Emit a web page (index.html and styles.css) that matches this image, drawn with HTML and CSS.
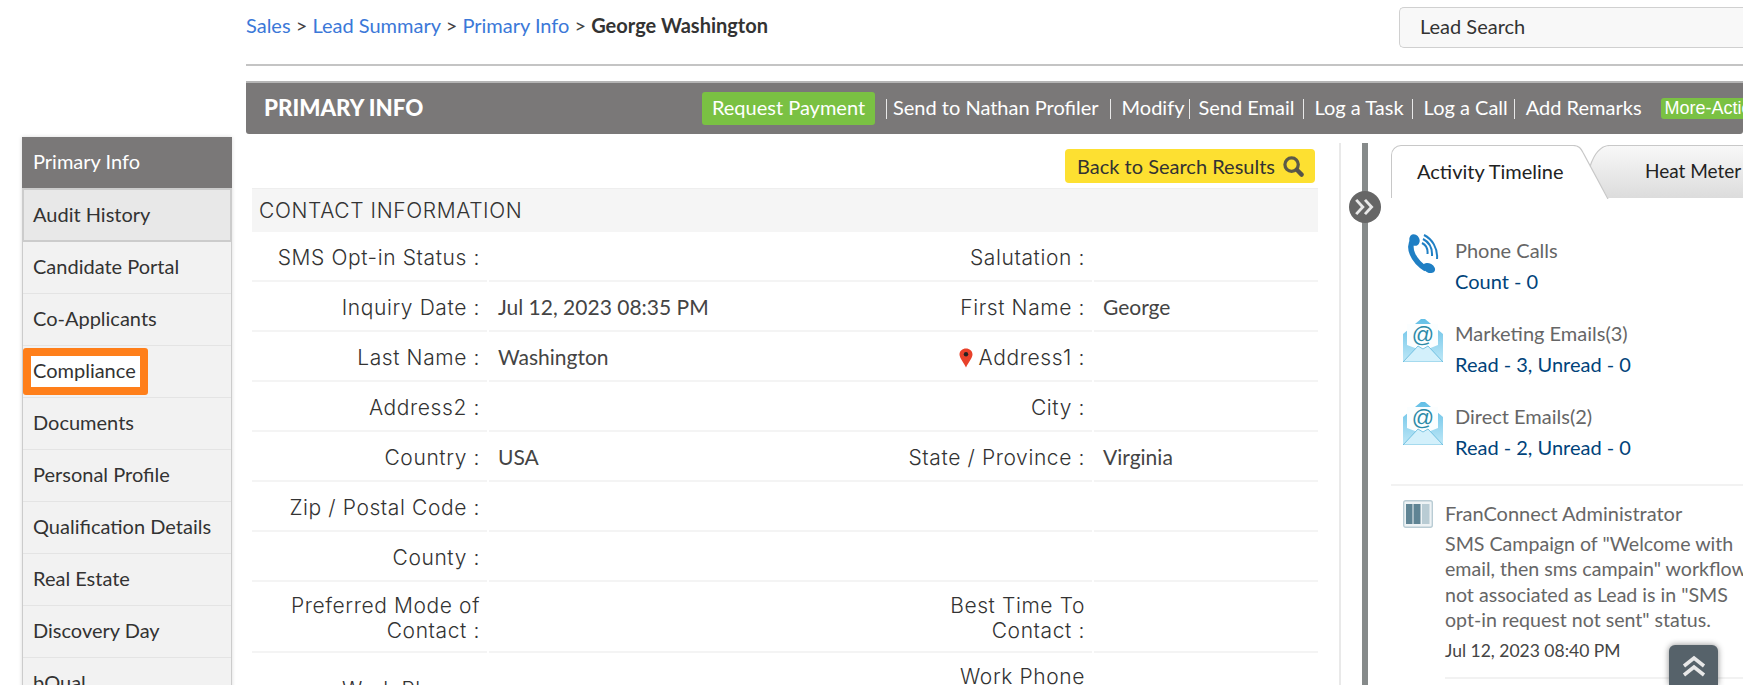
FILE: index.html
```html
<!DOCTYPE html>
<html lang="en">
<head>
    <meta charset="UTF-8">
    <title>Primary Info</title>
    <link rel="stylesheet" href="styles.css">
</head>
<body>

<div class="page">
    <!-- Left side menu -->
    <div class="side-menu">
        <div class="side-item side-active">Primary Info</div>
        <div class="side-item side-hover">Audit History</div>
        <div class="side-item">Candidate Portal</div>
        <div class="side-item">Co-Applicants</div>
        <div class="side-item"><span class="callout"></span><span class="callout-text">Compliance</span></div>
        <div class="side-item">Documents</div>
        <div class="side-item">Personal Profile</div>
        <div class="side-item">Qualification Details</div>
        <div class="side-item">Real Estate</div>
        <div class="side-item">Discovery Day</div>
        <div class="side-item">bQual</div>
    </div>

    <div class="main">
        <!-- Breadcrumb and search -->
        <div class="top-row">
            <div class="breadcrumb">
                <a href="#">Sales</a> &gt; <a href="#">Lead Summary</a> &gt; <a href="#">Primary Info</a> &gt; <b>George Washington</b>
            </div>
            <div class="search-box">Lead Search</div>
        </div>

        <!-- Header bar -->
        <div class="title-bar">
            <div class="title">PRIMARY INFO</div>
            <div class="actions">
                <a href="#" class="btn-green">Request Payment</a>
                <a href="#" class="action action-first">Send to Nathan Profiler</a>
                <a href="#" class="action action-modify">Modify</a>
                <a href="#" class="action action-mail">Send Email</a>
                <a href="#" class="action">Log a Task</a>
                <a href="#" class="action action-call">Log a Call</a>
                <a href="#" class="action action-last">Add Remarks</a>
                <a href="#" class="btn-more">More-Actions</a>
            </div>
        </div>

        <div class="content">
            <!-- Contact information -->
            <div class="left-panel">
                <div class="back-row">
                    <a href="#" class="btn-back">Back to Search Results
                        <svg class="search-icon" viewBox="0 0 22 22" width="21" height="21">
                            <circle cx="9" cy="9" r="7" fill="#fde031" stroke="#5c5a48" stroke-width="3.400"/>
                            <path d="M14.500 14.500l5 5" stroke="#55534a" stroke-width="4.500" stroke-linecap="round"/>
                        </svg>
                    </a>
                </div>
                <div class="section-head">CONTACT INFORMATION</div>
                <div class="info-grid">
                    <div class="label">SMS Opt-in Status :</div><div class="value"></div>
                    <div class="label">Salutation :</div><div class="value"></div>

                    <div class="label">Inquiry Date :</div><div class="value">Jul 12, 2023 08:35 PM</div>
                    <div class="label">First Name :</div><div class="value">George</div>

                    <div class="label">Last Name :</div><div class="value">Washington</div>
                    <div class="label">
                        <svg class="pin" viewBox="0 0 14 20" width="14" height="20">
                            <path d="M7 0.500c3.600 0 6.500 2.500 6.500 6 0 3.600-4 7.500-6.500 13C4.500 14 .5 10.100 .5 6.500 .5 3 3.400 .5 7 .5z" fill="#e8412a"/>
                            <circle cx="7" cy="6.300" r="2.200" fill="#222"/>
                        </svg>Address1 :
                    </div><div class="value"></div>

                    <div class="label">Address2 :</div><div class="value"></div>
                    <div class="label">City :</div><div class="value"></div>

                    <div class="label">Country :</div><div class="value">USA</div>
                    <div class="label">State / Province :</div><div class="value">Virginia</div>

                    <div class="label">Zip / Postal Code :</div><div class="value"></div>
                    <div class="label"></div><div class="value"></div>

                    <div class="label">County :</div><div class="value"></div>
                    <div class="label"></div><div class="value"></div>

                    <div class="label">Preferred Mode of Contact :</div><div class="value"></div>
                    <div class="label">Best Time To Contact :</div><div class="value"></div>

                    <div class="label">Work Phone :</div><div class="value"></div>
                    <div class="label">Work Phone Extension :</div><div class="value"></div>
                </div>
            </div>

            <div class="panel-divider"></div>

            <!-- Timeline rail -->
            <div class="rail">
                <div class="rail-toggle">
                    <svg viewBox="0 0 20 16" width="22" height="18">
                        <path d="M2 1.500L8 8l-6 6.500M10 1.500L16 8l-6 6.500" fill="none" stroke="#e9e9e9" stroke-width="2.600"/>
                    </svg>
                </div>
            </div>

            <!-- Activity panel -->
            <div class="right-panel">
                <div class="tabs">
                    <div class="tab tab-on">Activity Timeline</div>
                    <div class="tab tab-off">Heat Meter</div>
                    <svg class="tab-edges" viewBox="0 0 60 54" width="60" height="54">
                        <path d="M0 .5c6 0 8 3 10 7L35 54M37 .5c-8 0-15 6-20 21" fill="none" stroke="#c8c8c8" stroke-width="1.200"/>
                    </svg>
                </div>

                <div class="stat">
                    <div class="stat-cell">
                        <svg class="phone-icon" viewBox="0 0 34 40" width="34" height="40">
                            <path d="M6 6C1 13 5 26 19 35" fill="none" stroke="#1f7fc4" stroke-width="5.500"/>
                            <ellipse cx="7.500" cy="6" rx="5" ry="6" transform="rotate(-25 7.500 6)" fill="#1f7fc4"/>
                            <ellipse cx="22" cy="34" rx="6.500" ry="4.500" transform="rotate(30 22 34)" fill="#1f7fc4"/>
                            <path d="M15 9c4 2 6 6 5.500 11M16 5c6 3 9.500 9 9 17M17 1c8 4 14 13 13 24" fill="none" stroke="#1f7fc4" stroke-width="2"/>
                        </svg>
                    </div>
                    <div class="stat-text">
                        <div class="stat-name">Phone Calls</div>
                        <div class="stat-count">Count - 0</div>
                    </div>
                </div>

                <div class="stat">
                    <div class="stat-cell">
                        <svg class="mail-icon" viewBox="0 0 40 44" width="40" height="44">
                            <defs>
                                <linearGradient id="env" x1="0" y1="0" x2="0" y2="1">
                                    <stop offset="0" stop-color="#63bfe6"/>
                                    <stop offset="1" stop-color="#bfe8f7"/>
                                </linearGradient>
                            </defs>
                            <path d="M0 16L18 1h4l18 15v28H0z" fill="url(#env)"/>
                            <path d="M4 6h31v21L20 33 4 27z" fill="#fbfeff"/>
                            <path d="M0 44l15-16 5 3 5-3 15 16z" fill="#d3f0fb" stroke="#5fb8dc" stroke-width=".8"/>
                            <text x="20" y="24" class="at-sign">@</text>
                        </svg>
                    </div>
                    <div class="stat-text">
                        <div class="stat-name">Marketing Emails(3)</div>
                        <div class="stat-count">Read - 3, Unread - 0</div>
                    </div>
                </div>

                <div class="stat">
                    <div class="stat-cell">
                        <svg class="mail-icon" viewBox="0 0 40 44" width="40" height="44">
                            <path d="M0 16L18 1h4l18 15v28H0z" fill="url(#env)"/>
                            <path d="M4 6h31v21L20 33 4 27z" fill="#fbfeff"/>
                            <path d="M0 44l15-16 5 3 5-3 15 16z" fill="#d3f0fb" stroke="#5fb8dc" stroke-width=".8"/>
                            <text x="20" y="24" class="at-sign">@</text>
                        </svg>
                    </div>
                    <div class="stat-text">
                        <div class="stat-name">Direct Emails(2)</div>
                        <div class="stat-count">Read - 2, Unread - 0</div>
                    </div>
                </div>

                <div class="entry">
                    <svg class="entry-icon" viewBox="0 0 30 28" width="30" height="28">
                        <rect x=".7" y=".7" width="28.600" height="26.600" rx="2" fill="#eef3f5" stroke="#b9ccd4" stroke-width="1.400"/>
                        <rect x="3" y="4" width="6.500" height="20" fill="#5f8494"/>
                        <rect x="10.500" y="4" width="7" height="20" fill="#5f8494"/>
                        <rect x="19" y="4" width="7.500" height="20" fill="#b9ccd4"/>
                    </svg>
                    <div class="entry-text">
                        <div class="entry-name">FranConnect Administrator</div>
                        <div class="entry-msg">SMS Campaign of "Welcome with<br>email, then sms campain" workflow<br>not associated as Lead is in "SMS<br>opt-in request not sent" status.</div>
                        <div class="entry-date">Jul 12, 2023 08:40 PM</div>
                    </div>
                </div>
            </div>
        </div>
    </div>
</div>

<!-- Scroll to top -->
<div class="scroll-top">
    <svg viewBox="0 0 24 22" width="24" height="22">
        <path d="M2 11l10-8 10 8M2 20l10-8 10 8" fill="none" stroke="#e8e8e8" stroke-width="3.600"/>
    </svg>
</div>

</body>
</html>
```

FILE: styles.css
```css
html, body {
    margin: 0;
    height: 685px;
    overflow: hidden;
    background-color: #fff;
}

body {
    font-family: Lato, "Liberation Sans", sans-serif;
    font-size: 20px;
    color: #333;
}

a {
    text-decoration: none;
}

.page {
    display: flex;
    align-items: flex-start;
    height: 685px;
    overflow: hidden;
}

/* Left side menu */
.side-menu {
    flex: none;
    width: 210px;
    margin: 137px 0 0 22px;
    background-color: #f2f2f2;
    border-left: 1px solid #ccc;
    border-right: 1px solid #ccc;
    box-shadow: 0 0 4px rgba(0, 0, 0, 0.15);
    box-sizing: border-box;
}

.side-item {
    position: relative;
    height: 52px;
    line-height: 48px;
    padding-left: 10px;
    border-bottom: 1px solid #e4e4e4;
    box-sizing: border-box;
    color: #333;
}

.side-active {
    height: 51px;
    line-height: 49px;
    margin: 0 -1px;
    padding-left: 11px;
    background-color: #7a7878;
    color: #fff;
    border-bottom: 0;
}

.side-hover {
    height: 54px;
    line-height: 48px;
    margin: 0 -1px;
    background-color: #e8e8e8;
    border: 2px solid #ccc;
    padding-left: 9px;
}

.callout {
    position: absolute;
    left: 0;
    top: 2px;
    width: 109px;
    height: 31px;
    background-color: #fff;
    border: 8px solid #ff7f1a;
    border-radius: 3px;
}

.callout-text {
    position: relative;
    z-index: 1;
}

/* Main column */
.main {
    flex: none;
    width: 1497px;
    margin-left: 14px;
}

.top-row {
    display: flex;
    justify-content: space-between;
    height: 64px;
    border-bottom: 2px solid #c4c4c4;
}

.breadcrumb {
    padding-top: 12px;
    line-height: 26px;
    color: #444;
}

.breadcrumb a {
    color: #3b78d8;
}

.breadcrumb b {
    color: #333;
}

.search-box {
    width: 344px;
    height: 41px;
    margin-top: 7px;
    padding-left: 20px;
    line-height: 37px;
    background-color: #f8f8f8;
    border: 1px solid #d0d0d0;
    border-right: 0;
    border-radius: 5px 0 0 5px;
    box-sizing: border-box;
}

.title-bar {
    display: flex;
    align-items: center;
    height: 53px;
    margin-top: 15px;
    padding-left: 18px;
    background-color: #7a7878;
    border-top: 2px solid #b5b5b5;
    border-radius: 0 0 3px 3px;
    box-sizing: border-box;
    color: #fff;
    white-space: nowrap;
}

.title {
    flex: none;
    width: 438px;
    padding-bottom: 3px;
    font-weight: 900;
    font-size: 22.300px;
}

.actions {
    flex: none;
    display: flex;
    align-items: center;
}

.btn-green {
    width: 173px;
    height: 33px;
    margin-right: 11px;
    line-height: 30px;
    text-align: center;
    background-color: #7ac143;
    border-radius: 3px;
    color: #fff;
}

.action {
    color: #fff;
    line-height: 16px;
    padding: 0 8px 4px 11px;
    border-left: 1px solid #e8e8e8;
}

.action-first {
    padding-left: 6px;
    padding-right: 11px;
}

.action-modify {
    padding-right: 5px;
}

.action-mail {
    padding-left: 8px;
}

.action-call {
    padding-right: 6px;
}

.action-last {
    margin-right: 11px;
}

.btn-more {
    padding: 0 4px;
    height: 21px;
    line-height: 21px;
    background-color: #7ac143;
    border-radius: 3px;
    color: #fff;
    font-family: "Liberation Sans", sans-serif;
    font-size: 18px;
}

.content {
    display: flex;
    align-items: flex-start;
}

.left-panel {
    flex: none;
    width: 1066px;
    margin-left: 6px;
}

.back-row {
    display: flex;
    justify-content: flex-end;
    padding: 15px 3px 5px 0;
}

.btn-back {
    display: flex;
    align-items: center;
    gap: 8px;
    height: 34px;
    padding: 0 11px 0 12px;
    background-color: #fde031;
    border-radius: 4px;
    color: #333;
}

.section-head {
    height: 44px;
    line-height: 44px;
    padding-left: 7px;
    background-color: #f5f5f5;
    border-top: 1px solid #eee;
    box-sizing: border-box;
    font-family: Inter, sans-serif;
    font-weight: 300;
    font-size: 21px;
    letter-spacing: 0.6px;
    color: #333;
}

/* Label / value table */
.info-grid {
    display: grid;
    grid-template-columns: 235px 366px 239px 226px;
}

.label,
.value {
    display: flex;
    align-items: center;
    min-height: 50px;
    padding: 9px 0 8px;
    border-bottom: 2px solid #f4f4f4;
    box-sizing: border-box;
    line-height: 25px;
}

.label {
    justify-content: flex-end;
    padding-top: 11px;
    padding-left: 20px;
    padding-right: 7px;
    text-align: right;
    font-family: Inter, sans-serif;
    font-weight: 300;
    font-size: 21px;
    letter-spacing: 0.6px;
    color: #333;
}

.value {
    margin-left: 2px;
    padding-left: 9px;
    font-size: 21px;
    color: #444;
}

.pin {
    flex: none;
    margin-right: 6px;
}

.panel-divider {
    flex: none;
    width: 2px;
    height: 560px;
    margin-top: 9px;
    margin-left: 21px;
    background-color: #e9e9e9;
}

.rail {
    position: relative;
    flex: none;
    width: 6px;
    height: 560px;
    margin-top: 9px;
    margin-left: 21px;
    background-color: #868a8a;
}

.rail-toggle {
    position: absolute;
    left: -13px;
    top: 48px;
    width: 32px;
    height: 32px;
    display: flex;
    align-items: center;
    justify-content: center;
    background-color: #666;
    border-radius: 50%;
}

/* Activity panel */
.right-panel {
    flex: none;
    width: 360px;
    margin-left: 23px;
    margin-top: 11px;
}

.tabs {
    position: relative;
    display: flex;
    height: 53px;
    margin-bottom: 37px;
}

.tab {
    line-height: 50px;
    white-space: nowrap;
    box-sizing: border-box;
}

.tab-on {
    width: 182px;
    padding-left: 25px;
    background-color: #fff;
    border: 1px solid #c8c8c8;
    border-bottom: 0;
    border-right: 0;
    border-radius: 10px 0 0 0;
    color: #222;
}

.tab-off {
    width: 170px;
    padding-left: 72px;
    background: linear-gradient(#f8f8f8, #dcdcdc);
    border-top: 1px solid #c8c8c8;
    clip-path: polygon(37px 0, 170px 0, 170px 53px, 35px 53px, 17px 21px, 20px 14px, 27px 5px);
    font-size: 19px;
    color: #222;
}

.tab-edges {
    position: absolute;
    left: 182px;
    top: 0;
}

.stat {
    display: flex;
    height: 83px;
    padding-left: 12px;
}

.stat-cell {
    flex: none;
    width: 52px;
}

.phone-icon {
    margin-top: -1px;
    margin-left: 4px;
}

.mail-icon {
    margin-top: 0;
}

.stat-name {
    line-height: 30px;
    color: #666;
}

.stat-count {
    line-height: 32px;
    color: #00437a;
}

.at-sign {
    font-family: "Liberation Sans", sans-serif;
    font-size: 22px;
    fill: #2d8ba8;
    text-anchor: middle;
}

.entry {
    display: flex;
    padding-top: 12px;
    border-top: 2px solid #f2f2f2;
}

.entry-icon {
    flex: none;
    margin-left: 12px;
    margin-top: 2px;
}

.entry-text {
    width: 310px;
    margin-left: 12px;
    color: #666;
    white-space: nowrap;
}

.entry-name {
    line-height: 30px;
}

.entry-msg {
    margin-top: 3px;
    font-size: 19.600px;
    line-height: 25.400px;
    color: #666;
}

.entry-date {
    margin-top: 6px;
    padding-bottom: 14px;
    border-bottom: 2px solid #f2f2f2;
    font-size: 17.500px;
    line-height: 24px;
    color: #444;
}

.scroll-top {
    position: absolute;
    left: 1669px;
    top: 645px;
    width: 49px;
    height: 40px;
    display: flex;
    justify-content: center;
    padding-top: 10px;
    box-sizing: border-box;
    background-color: #56626a;
    border-radius: 6px 6px 0 0;
    box-shadow: 0 0 6px rgba(0, 0, 0, 0.45);
}
```
